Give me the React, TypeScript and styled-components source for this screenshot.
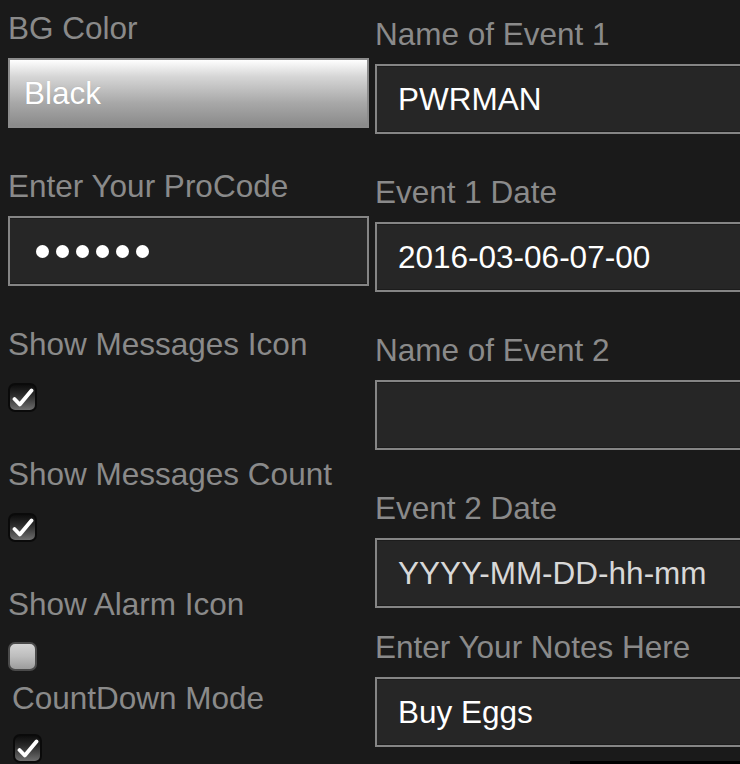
import React from "react";
import styled, { createGlobalStyle } from "styled-components";

const Global = createGlobalStyle`
  html, body {
    margin: 0;
    padding: 0;
    background: #1a1a1a;
    overflow: hidden;
  }
  body {
    font-family: "Liberation Sans", Arial, Helvetica, sans-serif;
  }
`;

const Page = styled.div`
  display: grid;
  grid-template-columns: 361px 420px;
  column-gap: 6px;
  padding-left: 8px;
  width: 740px;
  height: 764px;
  box-sizing: border-box;
  overflow: hidden;
  position: relative;
`;

const Column = styled.div<{ $top: number }>`
  display: flex;
  flex-direction: column;
  padding-top: ${(p) => p.$top}px;
`;

const Label = styled.div<{ $gap: number; $indent?: number }>`
  font-size: 31.5px;
  line-height: 36px;
  height: 36px;
  color: #8a8a8a;
  white-space: nowrap;
  margin-bottom: ${(p) => p.$gap}px;
  padding-left: ${(p) => p.$indent ?? 0}px;
`;

const Box = styled.div<{ $after: number }>`
  height: 70px;
  box-sizing: border-box;
  display: flex;
  align-items: center;
  margin-bottom: ${(p) => p.$after}px;
  font-size: 31.5px;
  color: #ffffff;
  white-space: nowrap;
`;

const SelectBox = styled(Box)`
  border: 2px solid #8c8c8c;
  background: linear-gradient(to bottom, #ffffff 0%, #d6d6d6 25%, #a8a8a8 65%, #8a8a8a 100%);
  padding-left: 14px;
  text-shadow: 0 0 1px rgba(0, 0, 0, 0.15);
`;

const TextBox = styled(Box)<{ $muted?: boolean }>`
  border: 2px solid #858585;
  box-shadow: inset 0 1px 0 #1c1c1c, inset 0 -1px 0 #1c1c1c;
  background: #262626;
  padding-left: 21px;
  color: ${(p) => (p.$muted ? "#d8d8d8" : "#ffffff")};
`;

const Dots = styled.div`
  display: flex;
  gap: 7px;
  padding-left: 5px;
`;

const Dot = styled.span`
  width: 13px;
  height: 13px;
  border-radius: 50%;
  background: #ffffff;
`;

const CheckWrap = styled.div<{ $after: number; $indent?: number }>`
  width: 29px;
  height: 29px;
  margin-left: ${(p) => p.$indent ?? 0}px;
  margin-bottom: ${(p) => p.$after}px;
`;

const CheckBoxFace = styled.div<{ $checked: boolean }>`
  width: 29px;
  height: 29px;
  box-sizing: border-box;
  border-radius: 7px;
  border: 2px solid ${(p) => (p.$checked ? "#0a0a0a" : "#4a4a4a")};
  background: ${(p) =>
    p.$checked
      ? "linear-gradient(to bottom, #0d0d0d 0%, #2a2a2a 40%, #6e6e6e 100%)"
      : "linear-gradient(to bottom, #d4d4d4 0%, #bdbdbd 50%, #9c9c9c 100%)"};
  display: flex;
  align-items: center;
  justify-content: center;
`;

const BottomStrip = styled.div`
  position: absolute;
  left: 570px;
  right: 0;
  bottom: 0;
  height: 3px;
  background: #000;
`;

function Check({ checked, after, indent }: { checked: boolean; after: number; indent?: number }) {
  return (
    <CheckWrap $after={after} $indent={indent}>
      <CheckBoxFace $checked={checked}>
        {checked && (
          <svg width="22" height="20" viewBox="0 0 22 20">
            <path
              d="M2.5 11 L7.8 16.5 L19.5 2.5"
              fill="none"
              stroke="#ffffff"
              strokeWidth="3.8"
              strokeLinecap="round"
              strokeLinejoin="round"
            />
          </svg>
        )}
      </CheckBoxFace>
    </CheckWrap>
  );
}

export default function App() {
  return (
    <>
      <Global />
      <Page>
        <Column $top={10}>
          <Label $gap={12}>BG Color</Label>
          <SelectBox $after={40}>Black</SelectBox>
          <Label $gap={12}>Enter Your ProCode</Label>
          <TextBox $after={40}>
            <Dots>
              {Array.from({ length: 6 }).map((_, i) => (
                <Dot key={i} />
              ))}
            </Dots>
          </TextBox>
          <Label $gap={21}>Show Messages Icon</Label>
          <Check checked after={44} />
          <Label $gap={21}>Show Messages Count</Label>
          <Check checked after={44} />
          <Label $gap={20}>Show Alarm Icon</Label>
          <Check checked={false} after={9} />
          <Label $gap={18} $indent={4}>CountDown Mode</Label>
          <Check checked after={0} indent={5} />
        </Column>
        <Column $top={16}>
          <Label $gap={12}>Name of Event 1</Label>
          <TextBox $after={40}>PWRMAN</TextBox>
          <Label $gap={12}>Event 1 Date</Label>
          <TextBox $after={40}>2016-03-06-07-00</TextBox>
          <Label $gap={12}>Name of Event 2</Label>
          <TextBox $after={40} />
          <Label $gap={12}>Event 2 Date</Label>
          <TextBox $after={21} $muted>YYYY-MM-DD-hh-mm</TextBox>
          <Label $gap={12}>Enter Your Notes Here</Label>
          <TextBox $after={0}>Buy Eggs</TextBox>
        </Column>
        <BottomStrip />
      </Page>
    </>
  );
}
